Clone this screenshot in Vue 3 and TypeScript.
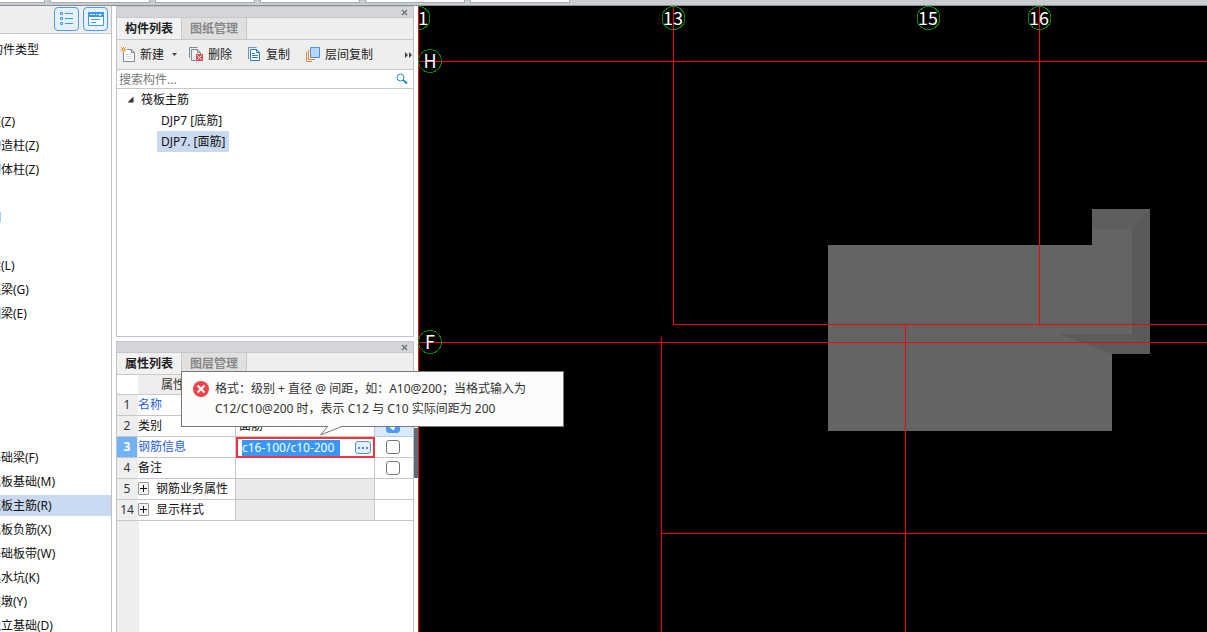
<script setup lang="ts">
import { ref } from 'vue'

interface NavRow { text: string; selected?: boolean }
interface PropRow { no: number; name: string; link?: boolean; group?: boolean; value?: string; check?: 'on' | 'off'; editing?: boolean }

const docTabs = [1, 2, 3, 4, 5, 6]

const navRows: NavRow[] = [
  { text: '' }, { text: '' },
  { text: '柱(Z)' }, { text: '构造柱(Z)' }, { text: '砌体柱(Z)' }, { text: '' },
  { text: '洞' }, { text: '' },
  { text: '梁(L)' }, { text: '连梁(G)' }, { text: '圈梁(E)' },
  { text: '' }, { text: '' }, { text: '' }, { text: '' }, { text: '' },
  { text: '基础梁(F)' }, { text: '筏板基础(M)' }, { text: '筏板主筋(R)', selected: true },
  { text: '筏板负筋(X)' }, { text: '基础板带(W)' }, { text: '集水坑(K)' },
  { text: '柱墩(Y)' }, { text: '独立基础(D)' },
]

const propRows: PropRow[] = [
  { no: 1, name: '名称', link: true },
  { no: 2, name: '类别', value: '面筋', check: 'on' },
  { no: 3, name: '钢筋信息', link: true, editing: true, check: 'off' },
  { no: 4, name: '备注', check: 'off' },
  { no: 5, name: '钢筋业务属性', group: true },
  { no: 14, name: '显示样式', group: true },
]

const search = ref('')
const rebar = ref('c16-100/c10-200')

const topAxes = [
  { label: '13', x: 255 },
  { label: '15', x: 510 },
  { label: '16', x: 621 },
]
const sideAxes = [
  { label: 'H', y: 55 },
  { label: 'F', y: 336 },
]
</script>

<template>
  <div class="app">
    <div class="doc-tabs">
      <span v-for="t in docTabs" :key="t" class="doc-tab"></span>
    </div>
    <div class="work">
      <aside class="nav">
        <div class="nav-head">
          <button class="view-btn" type="button" aria-label="列表视图">
            <svg width="14" height="16" viewBox="0 0 14 16" fill="none" stroke="#3d97ee">
              <path d="M.5 1.500h2v2h-2zM.5 6.500h2v2h-2zM.5 11.500h2v2h-2zM5 2.500h8M5 7.500h8M5 12.500h8" />
            </svg>
          </button>
          <button class="view-btn" type="button" aria-label="面板视图">
            <svg width="16" height="14" viewBox="0 0 16 14">
              <path d="M.5.5h15v13H.5z" fill="#fff" stroke="#3d97ee" />
              <path d="M0 0h16v5H0z" fill="#3d97ee" />
              <path d="M2 2h2v1H2zM5 2h2v1H5zM8 2h1v1H8zM10 2h4l-2 2z" fill="#fff" />
              <path d="M3 7.500h9M3 10.500h5" stroke="#3d97ee" />
            </svg>
          </button>
        </div>
        <div class="nav-title">构件类型</div>
        <ul class="nav-list">
          <li v-for="(r, i) in navRows" :key="i" :class="{ selected: r.selected }"><span>{{ r.text }}</span></li>
        </ul>
      </aside>

      <div class="dock">
        <section class="panel components">
          <div class="caption">
            <button type="button" class="close" aria-label="关闭">
              <svg width="7" height="7" viewBox="0 0 7 7"><path d="M1 1l5 5M6 1L1 6" stroke="#74777c" stroke-width="1.500" /></svg>
            </button>
          </div>
          <div class="tabs">
            <button type="button" class="tab active">构件列表</button>
            <button type="button" class="tab">图纸管理</button>
          </div>
          <div class="toolbar">
            <button type="button" class="tool new">
              <svg width="15" height="15" viewBox="0 0 15 15" fill="none">
                <path d="M2.500 5v9.500h11v-9l-3-3H6" fill="#fff" stroke="#7d8b96" />
                <path d="M10.500 2.500v3h3" stroke="#7d8b96" />
                <path d="M5 7.500h6M5 9.500h6M5 11.500h6" stroke="#d4dbe1" />
                <path d="M2.500 0v5M0 2.500h5M0 0l5 5M5 0L0 5" stroke="#f0a13c" />
                <path d="M2 2h1v1H2z" fill="#fff" />
              </svg>
              新建
              <svg class="caret" width="5" height="3" viewBox="0 0 5 3"><path d="M0 0h5L2.500 3z" fill="#444" /></svg>
            </button>
            <button type="button" class="tool">
              <svg width="15" height="15" viewBox="0 0 15 15" fill="none">
                <path d="M.5 11V.5h8M2.500 13.500v-11h6l3 3v2M2.500 13.500H7M8.500 2.500v3h3" stroke="#7d8b96" />
                <path d="M7 7h7v7H7z" fill="#d65252" />
                <path d="M8.500 8.500l4 4M12.500 8.500l-4 4" stroke="#fff" />
              </svg>
              删除
            </button>
            <button type="button" class="tool">
              <svg width="14" height="15" viewBox="0 0 14 15" fill="none">
                <path d="M.5 12V.5h8" stroke="#7d93a8" />
                <path d="M2.500 2.500h6l3 3v8h-9z" fill="#fff" stroke="#2d7cc9" />
                <path d="M8.500 2.500v3h3M4 6.500h3M4 8.500h6M4 10.500h6" stroke="#2d7cc9" />
              </svg>
              复制
            </button>
            <button type="button" class="tool">
              <svg width="15" height="15" viewBox="0 0 15 15" fill="none">
                <path d="M.5 5v9.500H6M2.500 3v9.500H9" stroke="#e8853a" />
                <path d="M4.500.5h9v10h-9z" fill="#b5d6ff" stroke="#4a92e2" />
              </svg>
              层间复制
            </button>
            <button type="button" class="more" aria-label="更多">
              <svg width="8" height="6" viewBox="0 0 8 6"><path d="M0 0l3 3-3 3zM4 0l3 3-3 3z" fill="#444" /></svg>
            </button>
          </div>
          <div class="search">
            <input v-model="search" type="text" placeholder="搜索构件..." aria-label="搜索构件" />
            <svg width="12" height="12" viewBox="0 0 12 12" fill="none" stroke="#1f8ac6">
              <circle cx="4.500" cy="4.500" r="3.500" /><path d="M7 7l4 3.500" stroke-width="2" />
            </svg>
          </div>
          <div class="tree">
            <div class="tree-row root">
              <svg width="7" height="7" viewBox="0 0 7 7"><path d="M6.500.5v6h-6z" fill="#333" /></svg>
              <span>筏板主筋</span>
            </div>
            <div class="tree-row leaf"><span>DJP7 [底筋]</span></div>
            <div class="tree-row leaf"><span class="picked">DJP7. [面筋]</span></div>
          </div>
        </section>

        <section class="panel props">
          <div class="caption">
            <button type="button" class="close" aria-label="关闭">
              <svg width="7" height="7" viewBox="0 0 7 7"><path d="M1 1l5 5M6 1L1 6" stroke="#74777c" stroke-width="1.500" /></svg>
            </button>
          </div>
          <div class="tabs">
            <button type="button" class="tab active">属性列表</button>
            <button type="button" class="tab">图层管理</button>
          </div>
          <div class="sheet">
            <table>
              <colgroup><col class="c-no" /><col class="c-name" /><col class="c-value" /><col /></colgroup>
              <thead>
                <tr><td></td><th scope="col">属性名称</th><td class="hd"></td><td class="hd"></td></tr>
              </thead>
              <tbody>
                <tr v-for="r in propRows" :key="r.no" :class="{ current: r.editing, group: r.group }">
                  <td class="no">{{ r.no }}</td>
                  <td class="name" :class="{ link: r.link }">
                    <button v-if="r.group" type="button" class="plus" aria-label="展开">
                      <svg width="7" height="7" viewBox="0 0 7 7"><path d="M0 3.500h7M3.500 0v7" stroke="#111" /></svg>
                    </button>{{ r.name }}
                  </td>
                  <td class="value">
                    <div v-if="r.editing" class="editor">
                      <input v-model="rebar" type="text" aria-label="钢筋信息" />
                      <button type="button" class="dots" aria-label="选择">
                        <svg width="10" height="2" viewBox="0 0 10 2"><path d="M0 0h2v2H0zM4 0h2v2H4zM8 0h2v2H8z" fill="#4a92d8" /></svg>
                      </button>
                    </div>
                    <template v-else>{{ r.value }}</template>
                  </td>
                  <td class="extra" :class="{ hot: r.check === 'on' }">
                    <label v-if="r.check" class="box">
                      <input type="checkbox" :checked="r.check === 'on'" :aria-label="r.name" />
                      <svg v-if="r.check === 'on'" width="8" height="7" viewBox="0 0 8 7"><path d="M1 3l3 3 3-5" fill="none" stroke="#fff" stroke-width="2" /></svg>
                    </label>
                  </td>
                </tr>
              </tbody>
            </table>
            <div class="gutter"></div>
          </div>
          <div class="scroll-thumb"></div>
          <div class="tip" role="alert">
            <svg class="bad" width="16" height="16" viewBox="0 0 16 16">
              <circle cx="8" cy="8" r="8" fill="#ee4348" />
              <path d="M4.500 4.500l7 7M11.500 4.500l-7 7" stroke="#fff" stroke-width="2" />
            </svg>
            <p>格式：级别 + 直径 @ 间距，如：A10@200；当格式输入为<br />C12/C10@200 时，表示 C12 与 C10 实际间距为 200</p>
            <svg class="tail" width="26" height="10" viewBox="0 0 26 10">
              <path d="M9 0L1.500 9L24 0" fill="#fcfcfc" stroke="#777" />
            </svg>
          </div>
        </section>
      </div>

      <main class="canvas">
        <svg width="100%" height="100%" shape-rendering="crispEdges">
          <path d="M410 239h264v-36h58v145h-38v77H410z" fill="#646464" />
          <path d="M674 203h58l-18 20h-40z" fill="#5e5e5e" />
          <path d="M732 203v145l-18-20V223z" fill="#5a5a5a" />
          <path d="M640 328h74l18 20h-38z" fill="#5c5c5c" />
          <g stroke="#f00">
            <line x1="0.500" y1="0" x2="0.500" y2="100%" />
            <line x1="0" y1="55.500" x2="100%" y2="55.500" />
            <line x1="255.500" y1="0" x2="255.500" y2="318" />
            <line x1="255" y1="318.500" x2="100%" y2="318.500" />
            <line x1="0" y1="336.500" x2="100%" y2="336.500" />
            <line x1="621.500" y1="0" x2="621.500" y2="318" />
            <line x1="487.500" y1="318" x2="487.500" y2="100%" />
            <line x1="243.500" y1="331" x2="243.500" y2="100%" />
            <line x1="243" y1="527.500" x2="100%" y2="527.500" />
          </g>
          <g fill="none" stroke="#008a00">
            <circle cx="0.500" cy="12" r="11.500" />
            <circle v-for="a in topAxes" :key="a.label" :cx="a.x + 0.5" cy="12" r="11.500" />
            <circle v-for="a in sideAxes" :key="a.label" cx="12" :cy="a.y" r="11.500" />
          </g>
          <g class="axis">
            <text x="5" y="19">1</text>
            <text v-for="a in topAxes" :key="a.label" :x="a.x" y="19">{{ a.label }}</text>
            <text v-for="a in sideAxes" :key="a.label" x="12" :y="a.y + 7">{{ a.label }}</text>
          </g>
        </svg>
      </main>
    </div>
  </div>
</template>

<style>
body { margin: 0; }
</style>

<style scoped>
* { box-sizing: border-box; }
.app {
  display: flex;
  flex-direction: column;
  height: 100vh;
  overflow: hidden;
  background: #fff;
  color: #111;
  font: 12px/20px "Noto Sans", "Noto Sans CJK SC", sans-serif;
}
button { padding: 0; border: 0; background: none; color: inherit; font: inherit; }
input { font: inherit; }
svg { display: block; flex: none; }

.doc-tabs {
  display: flex;
  flex: none;
  gap: 5px;
  height: 6px;
  padding-bottom: 2px;
  background: #c9ccd1;
  border-bottom: 1px solid #8b8f94;
}
.doc-tab { width: 100px; flex: none; background: #fff; border: 1px solid #a8abb0; border-top: 0; }
.doc-tab:first-child { width: 45px; border-left: 0; }

.work { display: flex; flex: 1; min-height: 0; }

.nav { width: 112px; flex: none; overflow: hidden; border-right: 1px solid #bcbfc5; }
.nav-head {
  display: flex;
  justify-content: flex-end;
  gap: 4px;
  height: 28px;
  padding: 1px 3px 0 0;
  background: #eee;
  border-bottom: 1px solid #c6c8cd;
}
.view-btn {
  display: flex;
  align-items: center;
  justify-content: center;
  width: 25px;
  height: 24px;
  border: 1px solid #4a9cf0;
  border-radius: 4px;
  background: #e6f1fc;
}
.nav-title { height: 29px; margin-left: -9px; line-height: 32px; white-space: nowrap; }
.nav-list { margin: 0; padding: 0; list-style: none; }
.nav-list li { height: 21px; margin-bottom: 3px; line-height: 21px; white-space: nowrap; }
.nav-list span { margin-left: -11px; }
.nav-list .selected { background: #c9d9ef; }

.dock { display: flex; flex-direction: column; gap: 4px; width: 306px; flex: none; padding: 0 4px; }
.panel { display: flex; flex-direction: column; border: 1px solid #bfc2c8; }
.components { height: 331px; flex: none; }
.props { position: relative; flex: 1; min-height: 0; border-bottom: 0; }
.caption {
  display: flex;
  justify-content: flex-end;
  align-items: center;
  flex: none;
  height: 11px;
  padding-right: 5px;
  background: #d4d5da;
  border-bottom: 1px solid #c6c8cd;
}
.tabs { display: flex; flex: none; height: 22px; background: #eee; border-bottom: 1px solid #c6c8cd; }
.tab { width: 65px; color: #888; background: #e0e0e0; border-right: 1px solid #c6c8cd; font-weight: 600; line-height: 20px; }
.tab.active { color: #222; background: #f1f1f1; }

.toolbar {
  display: flex;
  align-items: center;
  gap: 16px;
  flex: none;
  height: 30px;
  padding-left: 4px;
  background: #eee;
  border-bottom: 1px solid #c6c8cd;
  white-space: nowrap;
}
.tool { display: flex; align-items: center; gap: 4px; color: #222; }
.tool.new { margin-right: -4px; }
.caret { margin-left: 4px; }
.more { margin: 0 0 0 auto; }
.search { display: flex; align-items: center; flex: none; height: 19px; padding: 0 5px 0 2px; border-bottom: 1px solid #c6c8cd; }
.search input { flex: 1; min-width: 0; height: 18px; padding: 1px 0 0; border: 0; outline: 0; background: none; }
.search input::placeholder { color: #777; }

.tree-row { display: flex; align-items: center; height: 21px; line-height: 21px; white-space: nowrap; }
.root { gap: 7px; padding-left: 10px; }
.leaf { padding-left: 40px; }
.leaf span { padding: 0 4px; }
.picked { background: #c9d9ef; }

.sheet { display: flex; flex-direction: column; flex: 1; min-height: 0; }
table { width: 100%; table-layout: fixed; border-collapse: separate; border-spacing: 0; }
.c-no { width: 21px; }
.c-name { width: 98px; }
.c-value { width: 139px; }
td, th { height: 21px; padding: 0; line-height: 20px; white-space: nowrap; }
thead td, th { height: 20px; line-height: 19px; border-bottom: 1px solid #c6c8cd; font-weight: 400; }
th { padding-right: 4px; }
th, .hd { background: #eee; color: #333; }
tbody td { border-right: 1px solid #c3c6cb; border-bottom: 1px solid #c3c6cb; }
tbody td:last-child { border-right: 0; }
.no { background: #eee; color: #333; text-align: center; border-right-color: #eee; }
.link { color: #1f5fea; }
.current .no { background: #74b2f8; color: #fff; font-weight: 700; }
.group .value { background: #eaeaea; }
.value { padding-left: 3px; }
.current .value { padding: 0; border: 0; }
.plus {
  display: inline-flex;
  align-items: center;
  justify-content: center;
  width: 11px;
  height: 13px;
  margin: 0 7px 2px 0;
  border: 1px solid #999;
  border-radius: 1px;
  background: #f4f4f4;
  vertical-align: middle;
}
.editor { display: flex; align-items: center; justify-content: space-between; height: 21px; padding: 0 2px 0 4px; border: 2px solid #f5333a; background: #fff; }
.editor input { width: 98px; height: 16px; padding: 0; border: 0; outline: 0; background: #3797fb; color: #fff; }
.dots { display: flex; align-items: center; justify-content: center; width: 16px; height: 13px; border: 1px solid #4a92d8; border-radius: 3px; background: #e6f1fc; }
.hot { background: #d6e9fd; }
.box { display: grid; width: 14px; height: 14px; margin-left: 11px; place-items: center; }
.box > * { grid-area: 1 / 1; }
.box input {
  appearance: none;
  width: 14px;
  height: 14px;
  margin: 0;
  border: 1px solid #777;
  border-radius: 3px;
  background: #fff;
}
.box input:checked { border-color: #4a9cf5; background: #4a9cf5; }
.gutter { flex: 1; width: 22px; background: #eee; }

.scroll-thumb { position: absolute; left: 297px; top: 86px; width: 4px; height: 50px; background: #5f6a76; }
.tip {
  position: absolute;
  left: 64px;
  top: 29px;
  display: flex;
  gap: 6px;
  width: 383px;
  height: 56px;
  padding: 7px 12px 0 11px;
  border: 1px solid #777;
  background: #fcfcfc;
  color: #333;
  z-index: 2;
}
.tip p { margin: 0; white-space: nowrap; }
.bad { margin-top: 2px; }
.tail { position: absolute; left: 137px; top: 54px; }

.canvas { flex: 1; min-width: 0; background: #000; overflow: hidden; }
.axis { fill: #fff; font: 18px "Noto Sans CJK SC", sans-serif; text-anchor: middle; }
</style>
